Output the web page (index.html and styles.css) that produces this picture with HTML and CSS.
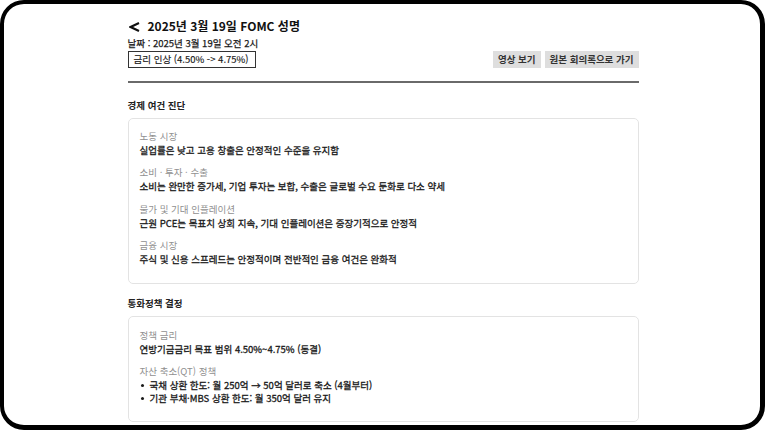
FILE: index.html
```html
<!DOCTYPE html>
<html lang="ko">
<head>
<meta charset="utf-8">
<title>2025년 3월 19일 FOMC 성명</title>
<link rel="stylesheet" href="styles.css">
</head>
<body>
<div class="frame">
  <div class="screen">
    <main class="page">
      <header class="header">
        <div class="header-left">
          <h1 class="title">
            <svg class="back" width="11" height="10" viewBox="0 0 11 10" aria-hidden="true"><polyline points="10,1 1.6,5 10,9" fill="none" stroke="#111" stroke-width="2.1" stroke-linejoin="miter"/></svg>
            <span>2025년 3월 19일 FOMC 성명</span>
          </h1>
          <div class="date">날짜 : 2025년 3월 19일 오전 2시</div>
          <div class="badge">금리 인상 (4.50% -&gt; 4.75%)</div>
        </div>
        <div class="actions">
          <span class="btn">영상 보기</span>
          <span class="btn">원본 회의록으로 가기</span>
        </div>
      </header>
      <hr class="rule">

      <section class="section">
        <h2 class="section-title">경제 여건 진단</h2>
        <div class="card">
          <div class="item">
            <div class="label">노동 시장</div>
            <div class="value">실업률은 낮고 고용 창출은 안정적인 수준을 유지함</div>
          </div>
          <div class="item">
            <div class="label">소비 · 투자 · 수출</div>
            <div class="value">소비는 완만한 증가세, 기업 투자는 보합, 수출은 글로벌 수요 둔화로 다소 약세</div>
          </div>
          <div class="item">
            <div class="label">물가 및 기대 인플레이션</div>
            <div class="value">근원 PCE는 목표치 상회 지속, 기대 인플레이션은 중장기적으로 안정적</div>
          </div>
          <div class="item">
            <div class="label">금융 시장</div>
            <div class="value">주식 및 신용 스프레드는 안정적이며 전반적인 금융 여건은 완화적</div>
          </div>
        </div>
      </section>

      <section class="section">
        <h2 class="section-title">통화정책 결정</h2>
        <div class="card card-last">
          <div class="item">
            <div class="label">정책 금리</div>
            <div class="value">연방기금금리 목표 범위 4.50%~4.75% (동결)</div>
          </div>
          <div class="item">
            <div class="label">자산 축소(QT) 정책</div>
            <ul class="bullets">
              <li>국채 상환 한도: 월 250억 → 50억 달러로 축소 (4월부터)</li>
              <li>기관 부채·MBS 상환 한도: 월 350억 달러 유지</li>
            </ul>
          </div>
        </div>
      </section>
    </main>
  </div>
</div>
</body>
</html>
```

FILE: styles.css
```css
* { box-sizing: border-box; }

html, body {
  margin: 0;
  padding: 0;
  background: #ffffff;
}

body {
  font-family: "Noto Sans CJK KR", "Noto Sans", sans-serif;
  color: #1a1a1a;
  width: 766px;
  height: 432px;
  overflow: hidden;
}

.frame {
  width: 765px;
  height: 430px;
  border: 5px solid #000;
  border-left-width: 4px;
  border-top-width: 4px;
  border-radius: 24px;
  overflow: hidden;
  background: #fff;
}

.screen {
  height: 100%;
  overflow: hidden;
  padding: 12px 0 0 2px;
}

.page {
  width: 511px;
  margin: 0 auto;
}

.header {
  display: flex;
  justify-content: space-between;
  align-items: flex-end;
}

.header-left {
  display: flex;
  flex-direction: column;
  align-items: flex-start;
}

.title {
  margin: 0 0 1px;
  font-size: 12px;
  line-height: 20px;
  font-weight: 700;
  color: #111;
  display: flex;
  align-items: center;
  gap: 8px;
}

.back {
  display: block;
  margin-left: 1px;
  margin-top: 1px;
}

.date {
  font-size: 9.5px;
  line-height: 13px;
  color: #1a1a1a;
  -webkit-text-stroke: 0.25px #1a1a1a;
}

.badge {
  margin-top: 1px;
  font-size: 9.5px;
  line-height: 13px;
  padding: 1px 6px 1px 5px;
  border: 1px solid #333;
  color: #1a1a1a;
  -webkit-text-stroke: 0.15px #1a1a1a;
}

.actions {
  display: flex;
  gap: 4px;
}

.btn {
  font-size: 9.5px;
  line-height: 13px;
  font-weight: 700;
  color: #333;
  background: #dedede;
  padding: 2px 5px;
}

.rule {
  margin: 13px 0 0;
  border: 0;
  border-top: 2px solid #6a6a6a;
  height: 0;
}

.section {
  margin-top: 16px;
}

.section + .section {
  margin-top: 13px;
}

.section-title {
  margin: 0 0 6px;
  font-size: 9.5px;
  line-height: 13px;
  font-weight: 700;
  color: #222;
}

.card {
  border: 1px solid #e3e3e3;
  border-radius: 5px;
  padding: 11px 11px 17px;
}

.card-last {
  padding-top: 12px;
  padding-bottom: 16px;
}

.item + .item {
  margin-top: 9.3px;
}

.label {
  font-size: 9.5px;
  line-height: 13px;
  color: #909090;
  margin-bottom: 1px;
}

.value {
  font-size: 9.5px;
  line-height: 13px;
  color: #1a1a1a;
  -webkit-text-stroke: 0.3px #1a1a1a;
}

.bullets {
  list-style: none;
  margin: 0;
  padding: 0;
}

.bullets li {
  font-size: 9.5px;
  line-height: 13px;
  color: #1a1a1a;
  -webkit-text-stroke: 0.3px #1a1a1a;
  display: flex;
  align-items: center;
}

.bullets li::before {
  content: "";
  width: 3px;
  height: 3px;
  border-radius: 50%;
  background: #1a1a1a;
  margin: 0 6px 0 1px;
  flex: none;
}
```
